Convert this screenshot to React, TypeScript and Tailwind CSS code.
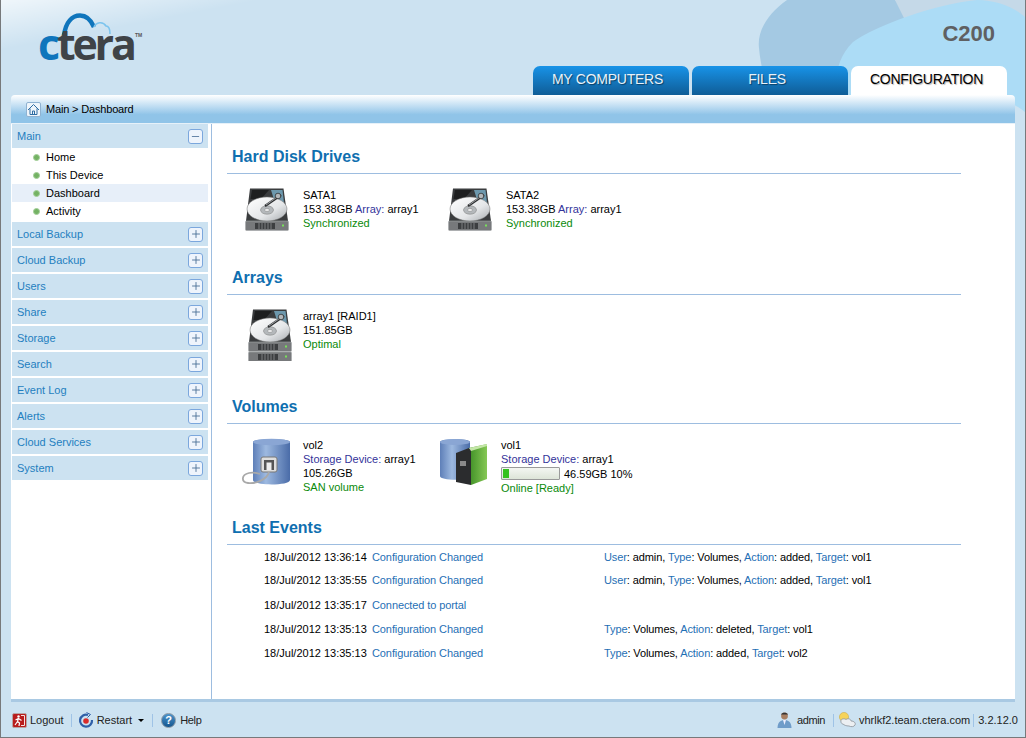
import { Minus, Plus } from "lucide-react";

const sidebarSections = ["Local Backup", "Cloud Backup", "Users", "Share", "Storage", "Search", "Event Log", "Alerts", "Cloud Services", "System"];
const mainItems = ["Home", "This Device", "Dashboard", "Activity"];

type Part = { t: string; blue?: boolean };
const events: { date: string; name: string; details: Part[]; rowClass: string }[] = [
	{
		date: "18/Jul/2012 13:36:14",
		name: "Configuration Changed",
		rowClass: "h-[23px]",
		details: [
			{ t: "User", blue: true }, { t: ": admin, " }, { t: "Type", blue: true }, { t: ": Volumes, " },
			{ t: "Action", blue: true }, { t: ": added, " }, { t: "Target", blue: true }, { t: ": vol1" },
		],
	},
	{
		date: "18/Jul/2012 13:35:55",
		name: "Configuration Changed",
		rowClass: "h-[24px]",
		details: [
			{ t: "User", blue: true }, { t: ": admin, " }, { t: "Type", blue: true }, { t: ": Volumes, " },
			{ t: "Action", blue: true }, { t: ": added, " }, { t: "Target", blue: true }, { t: ": vol1" },
		],
	},
	{ date: "18/Jul/2012 13:35:17", name: "Connected to portal", rowClass: "h-[26px]", details: [] },
	{
		date: "18/Jul/2012 13:35:13",
		name: "Configuration Changed",
		rowClass: "h-[22px]",
		details: [
			{ t: "Type", blue: true }, { t: ": Volumes, " }, { t: "Action", blue: true }, { t: ": deleted, " },
			{ t: "Target", blue: true }, { t: ": vol1" },
		],
	},
	{
		date: "18/Jul/2012 13:35:13",
		name: "Configuration Changed",
		rowClass: "h-[26px]",
		details: [
			{ t: "Type", blue: true }, { t: ": Volumes, " }, { t: "Action", blue: true }, { t: ": added, " },
			{ t: "Target", blue: true }, { t: ": vol2" },
		],
	},
];

function Logo() {
	return (
		<div className="relative w-[110px] h-[60px]">
			<svg className="absolute left-[22px] top-0" width="90" height="36" viewBox="0 0 90 36">
				<path d="M4 23 C6 10 12 3.5 20 3.5 C26 3.5 31 8 34 15" fill="none" stroke="#0f75bc" strokeWidth="4.5" />
				<path d="M34 15 C36 10 43 9 46 14 C49 14 50 18 50 22" fill="none" stroke="#7cc4ee" strokeWidth="1.6" />
			</svg>
			<div className="absolute left-0 top-[4px] font-['Open_Sans',sans-serif] font-bold text-[43px] leading-[56px] tracking-[-3.2px] text-[#3f4347]">
				<span className="text-[#0f75bc]">c</span>tera
			</div>
			<span className="absolute left-[97px] top-[21px] text-[5px] leading-none font-bold text-[#555]">TM</span>
		</div>
	);
}

function Swoosh() {
	return (
		<svg className="absolute right-0 top-0" width="280" height="125" viewBox="0 0 280 125">
			<path d="M42 0 C22 14 12 32 14 48 C15 62 20 80 22 96 L200 96 L170 35 C170 22 160 8 150 0 Z" fill="#a4c9e3" />
			<path d="M150 0 L280 0 L280 40 L170 40 Z" fill="#c5d9e8" />
			<path d="M93 96 C90 75 92 58 108 42 C130 26 190 4 232 0 C252 0 270 8 280 17 L280 112 C272 106 262 100 250 96 Z" fill="#acdcf6" />
		</svg>
	);
}

function HomeIcon() {
	return (
		<span className="flex items-center justify-center w-[15px] h-[15px] rounded-[2px] bg-[#eef5fb] border border-[#8fb2d1]">
			<svg width="13" height="13" viewBox="0 0 13 13">
				<path d="M1 7 L6.5 1.5 L12 7 M3 5.5 V11.5 H10 V5.5 M5.5 11.5 V8 H7.5 V11.5" fill="none" stroke="#2f6da3" strokeWidth="1" />
			</svg>
		</span>
	);
}

function SectionHeader({ label, open }: { label: string; open?: boolean }) {
	return (
		<div className="flex items-center justify-between h-6 pl-[5px] pr-[5px] bg-[#cce2f1]">
			<span className="text-[#1f7fc0]">{label}</span>
			<span className="flex items-center justify-center w-[15px] h-[15px] rounded-[3px] bg-[#eef4fc] border border-[#7ba7dd]">
				{open ? <Minus size={11} strokeWidth={1.8} color="#4a6f96" /> : <Plus size={12} strokeWidth={1.8} color="#4a6f96" />}
			</span>
		</div>
	);
}

function Disk({ bays = 1, id }: { bays?: number; id: string }) {
	const baseY = 33;
	return (
		<svg width="44" height={bays === 1 ? 44 : 52} viewBox={`0 0 44 ${bays === 1 ? 44 : 52}`}>
			<defs>
				<linearGradient id={id} x1="0" x2="1" y1="0" y2="1">
					<stop offset="0" stopColor="#ffffff" />
					<stop offset="0.6" stopColor="#e4e6e8" />
					<stop offset="1" stopColor="#a8acb0" />
				</linearGradient>
			</defs>
			<path d="M5 0.5 H38.5 L43 33 H1 Z" fill="#3a3c3e" />
			<path d="M7 2 H24 L16 11 H5.5 Z" fill="#1e1f20" />
			<path d="M26 2 H37.5 L39 15 H30 Z" fill="#6d98ad" />
			<ellipse cx="22" cy="21" rx="20" ry="12" fill={`url(#${id})`} stroke="#777" strokeWidth="0.5" />
			<ellipse cx="22" cy="22" rx="6.5" ry="4.2" fill="#b4b8bb" stroke="#777" strokeWidth="0.5" />
			<ellipse cx="22" cy="22" rx="2.5" ry="1.6" fill="#e7e8e9" stroke="#777" strokeWidth="0.4" />
			<path d="M36 7 L20 18" stroke="#2c2e30" strokeWidth="2.2" />
			<path d="M35 7 L21 17" stroke="#c9ccce" strokeWidth="0.7" />
			<circle cx="33" cy="8" r="2.8" fill="#b2b6b9" stroke="#222" strokeWidth="0.7" />
			{Array.from({ length: bays }).map((_, i) => (
				<g key={i} transform={`translate(0 ${baseY + i * 10})`}>
					<rect x="0.5" y="0" width="43" height="9.5" rx="1" fill="#77797b" stroke="#a5a8aa" strokeWidth="0.6" />
					<rect x="10" y="2" width="20" height="6" fill="#3c3e40" />
					<path d="M14 2 V8 M17 2 V8 M20 2 V8 M23 2 V8 M26 2 V8" stroke="#8d9093" strokeWidth="0.8" />
					<rect x="37" y="3.5" width="2" height="2" fill="#78e05a" />
				</g>
			))}
		</svg>
	);
}

function SanIcon() {
	return (
		<svg width="50" height="48" viewBox="0 0 50 48">
			<defs>
				<linearGradient id="cyl" x1="0" x2="1" y1="0" y2="0">
					<stop offset="0" stopColor="#5e7fb8" />
					<stop offset="0.35" stopColor="#9db9e0" />
					<stop offset="1" stopColor="#4a6ca8" />
				</linearGradient>
			</defs>
			<path d="M12 4 C12 0 49 0 49 4 L49 42 C49 48 12 48 12 42 Z" fill="url(#cyl)" />
			<ellipse cx="30.5" cy="4" rx="18.5" ry="3.2" fill="#8aa6d4" />
			<rect x="20" y="19" width="16" height="15" rx="2" fill="#dedede" stroke="#777" />
			<rect x="23" y="22" width="10" height="10" fill="#555" />
			<rect x="25.5" y="24.5" width="5" height="7.5" fill="#eee" />
			<path d="M28 34 C26 42 14 46 7 45 C0 44 0 37 8 35 C12 34 16 35 19 36" fill="none" stroke="#a9a9a9" strokeWidth="1.8" />
		</svg>
	);
}

function BookIcon() {
	return (
		<svg width="50" height="48" viewBox="0 0 50 48">
			<defs>
				<linearGradient id="cyl2" x1="0" x2="1" y1="0" y2="0">
					<stop offset="0" stopColor="#5e7fb8" />
					<stop offset="0.4" stopColor="#9db9e0" />
					<stop offset="1" stopColor="#4a6ca8" />
				</linearGradient>
				<linearGradient id="bookg" x1="0" x2="1" y1="0" y2="0">
					<stop offset="0" stopColor="#3f8f26" />
					<stop offset="1" stopColor="#86c855" />
				</linearGradient>
			</defs>
			<path d="M1 4 C1 0 31 0 31 4 L31 38 C31 43 1 43 1 38 Z" fill="url(#cyl2)" />
			<ellipse cx="16" cy="4" rx="15" ry="3" fill="#8aa6d4" />
			<path d="M17 15 L30 10 L32 11 L32 47 L17 44 Z" fill="#2b2c2e" />
			<path d="M30 10 L48 6 L48 41 L32 47 L32 11 Z" fill="url(#bookg)" />
			<path d="M30 10 L48 6 L48 8 L32 13 Z" fill="#c4e6a8" />
			<rect x="21" y="23" width="6" height="5" fill="#8a8a8a" />
		</svg>
	);
}

function ProgressBar() {
	return (
		<span className="inline-block w-[59px] h-[13px] border border-[#9a9a9a] rounded-[1px] bg-gradient-to-b from-[#f4f6f2] to-[#dde5d8] p-px mr-[4px]">
			<span className="block h-full w-[10%] bg-[#35c11e]" />
		</span>
	);
}

function SectionTitle({ children }: { children: string }) {
	return (
		<div className="h-[35px] pl-[5px] pt-[2px] flex items-center border-b border-[#9dbde0]">
			<h2 className="font-bold text-[16px] text-[#0f6fb0]">{children}</h2>
		</div>
	);
}

function Label({ children }: { children: string }) {
	return <span className="text-[#33339a]">{children}</span>;
}

function LogoutIcon() {
	return (
		<svg width="15" height="15" viewBox="0 0 15 15">
			<rect x="0.5" y="0.5" width="14" height="14" rx="1.5" fill="#b81c1c" stroke="#b8a3a3" />
			<path d="M9 2.5 H12.5 V12.5 H9" fill="none" stroke="#f3dede" strokeWidth="1" />
			<circle cx="6.5" cy="3.5" r="1.2" fill="#fff" />
			<path d="M6.5 5 L5.5 8.5 L7.5 10 L7 13 M5.5 8.5 L3 12 M6.5 5.5 L9.5 7.5 M6.3 5.5 L3.5 7" fill="none" stroke="#fff" strokeWidth="1.2" />
		</svg>
	);
}

function RestartIcon() {
	return (
		<svg width="16" height="16" viewBox="0 0 16 16">
			<path d="M10 3 A6 6 0 1 0 14 8" fill="none" stroke="#2f5fa8" strokeWidth="2.2" />
			<path d="M8.5 0.5 L12.5 2.5 L9.5 5.5" fill="none" stroke="#2f5fa8" strokeWidth="1" />
			<circle cx="8" cy="9" r="2.8" fill="#d92b2b" />
		</svg>
	);
}

function HelpIcon() {
	return (
		<span className="flex items-center justify-center w-[15px] h-[15px] rounded-full bg-gradient-to-b from-[#4a93cc] to-[#14568f] border border-[#8a97a3] text-white font-bold text-[11px] leading-none">?</span>
	);
}

function UserIcon() {
	return (
		<svg width="15" height="16" viewBox="0 0 15 16">
			<circle cx="7.5" cy="4" r="3.4" fill="#a87f62" />
			<path d="M4 2.5 C5 0 10 0 11 2.5 Z" fill="#333" />
			<path d="M0.5 16 C0.5 10 4 8 7.5 8 C11 8 14.5 10 14.5 16 Z" fill="#6f9cc9" />
			<path d="M6 8 H9 L7.5 13 Z" fill="#eef" />
		</svg>
	);
}

function CloudIcon() {
	return (
		<svg width="18" height="16" viewBox="0 0 18 16">
			<circle cx="6" cy="5" r="4.6" fill="#f6d35a" stroke="#c9a53a" strokeWidth="0.5" />
			<path d="M3 10 C2 7 6 6 8 7.5 C10 6 13 7 13 9 C16 9 18 11 17 13 C16 15 13 15 11 14 C8 14 6 13 5 12 C4 12 3 11 3 10 Z" fill="#eceff2" stroke="#8c9299" strokeWidth="0.8" />
		</svg>
	);
}

function Sep() {
	return <span className="block w-px h-[13px] bg-[#9fc3e6]" />;
}

export default function App() {
	return (
		<div className="relative w-[1026px] h-[738px] overflow-hidden bg-[#cce2f1] border-l border-r border-b border-[#77797b] font-['Liberation_Sans',Arial,sans-serif] text-[11px] leading-[14px] text-black">
			{/* Header */}
			<div className="relative h-[95px]">
				<div className="absolute left-0 top-0 w-[260px] h-[50px] bg-gradient-to-br from-white/70 to-transparent to-50%" />
				<Swoosh />
				<div className="absolute left-[37px] top-[12px]">
					<Logo />
				</div>
				<div className="absolute right-[30px] top-[21px] font-bold text-[22px] leading-[26px] text-[#5f6062]">C200</div>
				<div className="absolute left-[532px] bottom-0 flex gap-[3px] text-[14px] tracking-[-0.25px]">
					<div className="w-[156px] h-[29px] pb-[3px] pr-[7px] flex items-center justify-center rounded-t-[7px] text-[#e8f2fa] [text-shadow:1px_1px_1px_rgba(0,0,0,0.45)] bg-gradient-to-b from-[#1893e8] to-[#0f5d97]">MY COMPUTERS</div>
					<div className="w-[156px] h-[29px] pb-[3px] pr-[6px] flex items-center justify-center rounded-t-[7px] text-[#e8f2fa] [text-shadow:1px_1px_1px_rgba(0,0,0,0.45)] bg-gradient-to-b from-[#1893e8] to-[#0f5d97]">FILES</div>
					<div className="w-[156px] h-[29px] pb-[3px] pr-[5px] flex items-center justify-center rounded-t-[7px] text-black [text-shadow:1px_1px_1px_rgba(0,0,0,0.3)] bg-white">CONFIGURATION</div>
				</div>
			</div>

			{/* Main panel */}
			<div className="relative mx-[10px] w-[1004px]">
				<div className="flex items-center gap-[5px] h-[28px] pl-[15px] rounded-t-[4px] bg-gradient-to-b from-white to-[#90c4e8] to-70%">
					<HomeIcon />
					<span className="tracking-[-0.17px]">Main &gt; Dashboard</span>
				</div>
				<div className="flex h-[576px] bg-white border-t border-[#e6f1f9]">
					{/* Sidebar */}
					<aside className="w-[201px] shrink-0 pl-px pr-[3px] border-r border-[#9dbde0]">
						<SectionHeader label="Main" open />
						<div className="mb-[2px]">
							{mainItems.map((item) => (
								<div key={item} className={`flex items-center h-[18px] pl-[21px] ${item === "Dashboard" ? "bg-[#e7eff9]" : ""}`}>
									<span className="w-[7px] h-[7px] rounded-full bg-[#74b264] border border-[#a4cf9a] mr-[6px]" />
									<span>{item}</span>
								</div>
							))}
						</div>
						<div className="flex flex-col gap-[2px]">
							{sidebarSections.map((s) => (
								<SectionHeader key={s} label={s} />
							))}
						</div>
					</aside>

					{/* Content */}
					<main className="flex-1 pl-[15px] pr-[54px] pt-[15px]">
						<SectionTitle>Hard Disk Drives</SectionTitle>
						<div className="flex h-[86px] pl-[18px] pt-[14px]">
							<div className="flex w-[203px]">
								<div className="w-[58px]"><Disk id="d1" /></div>
								<div>
									<div>SATA1</div>
									<div>153.38GB <Label>Array:</Label> array1</div>
									<div className="text-[#0a8a0a]">Synchronized</div>
								</div>
							</div>
							<div className="flex">
								<div className="w-[58px]"><Disk id="d2" /></div>
								<div>
									<div>SATA2</div>
									<div>153.38GB <Label>Array:</Label> array1</div>
									<div className="text-[#0a8a0a]">Synchronized</div>
								</div>
							</div>
						</div>

						<SectionTitle>Arrays</SectionTitle>
						<div className="flex h-[94px] pl-[21px] pt-[14px]">
							<div className="w-[55px]"><Disk id="d3" bays={2} /></div>
							<div>
								<div>array1 [RAID1]</div>
								<div>151.85GB</div>
								<div className="text-[#0a8a0a]">Optimal</div>
							</div>
						</div>

						<SectionTitle>Volumes</SectionTitle>
						<div className="flex h-[86px] pl-[14px] pt-[14px]">
							<div className="flex w-[198px]">
								<div className="w-[62px]"><SanIcon /></div>
								<div>
									<div>vol2</div>
									<div><Label>Storage Device:</Label> array1</div>
									<div>105.26GB</div>
									<div className="text-[#0a8a0a]">SAN volume</div>
								</div>
							</div>
							<div className="flex">
								<div className="w-[62px]"><BookIcon /></div>
								<div>
									<div>vol1</div>
									<div><Label>Storage Device:</Label> array1</div>
									<div className="flex items-center h-[15px]"><ProgressBar />46.59GB 10%</div>
									<div className="text-[#0a8a0a]">Online [Ready]</div>
								</div>
							</div>
						</div>

						<SectionTitle>Last Events</SectionTitle>
						<div>
							{events.map((ev, i) => (
								<div key={i} className={`flex items-center pl-[37px] tracking-[-0.1px] ${ev.rowClass}`}>
									<span className="w-[108px] tracking-normal">{ev.date}</span>
									<span className="w-[232px] text-[#1f6fb5]">{ev.name}</span>
									<span>
										{ev.details.map((p, j) => (
											<span key={j} className={p.blue ? "text-[#1f6fb5]" : ""}>{p.t}</span>
										))}
									</span>
								</div>
							))}
						</div>
					</main>
				</div>
				<div className="h-[3px] bg-[#a9c9e3]" />
			</div>

			{/* Footer */}
			<div className="flex items-center justify-between h-[35px] pt-px pl-[11px] pr-[7px] text-[#222]">
				<div className="flex items-center">
					<LogoutIcon />
					<span className="ml-[3px]">Logout</span>
					<span className="ml-[7px] mr-[6px]"><Sep /></span>
					<RestartIcon />
					<span className="ml-[3px]">Restart</span>
					<span className="ml-[6px] w-0 h-0 border-l-[3px] border-r-[3px] border-t-[3px] border-l-transparent border-r-transparent border-t-black" />
					<span className="mx-[8px]"><Sep /></span>
					<HelpIcon />
					<span className="ml-[4px] tracking-[-0.3px]">Help</span>
				</div>
				<div className="flex items-center">
					<UserIcon />
					<span className="ml-[5px] tracking-[-0.4px]">admin</span>
					<span className="ml-[8px] mr-[4px]"><Sep /></span>
					<CloudIcon />
					<span className="ml-[3px]">vhrlkf2.team.ctera.com</span>
					<span className="ml-[3px] mr-[4px]"><Sep /></span>
					<span>3.2.12.0</span>
				</div>
			</div>
		</div>
	);
}
